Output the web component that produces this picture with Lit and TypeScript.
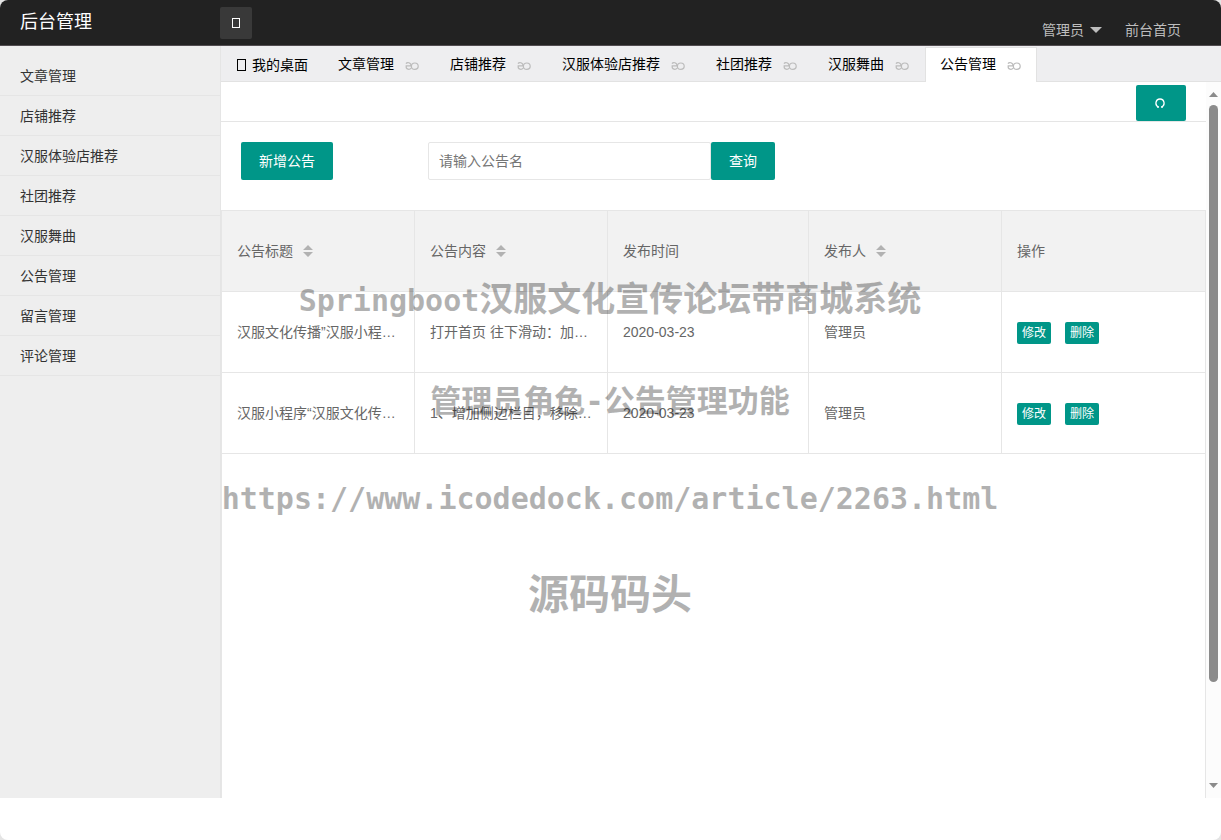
import { LitElement, html, css } from "lit";
import { customElement, state } from "lit/decorators.js";

interface Notice {
  title: string;
  content: string;
  date: string;
  author: string;
}

const MENU = ["文章管理", "店铺推荐", "汉服体验店推荐", "社团推荐", "汉服舞曲", "公告管理", "留言管理", "评论管理"];
const TABS = ["文章管理", "店铺推荐", "汉服体验店推荐", "社团推荐", "汉服舞曲", "公告管理"];
const COLUMNS = [
  { label: "公告标题", sortable: true },
  { label: "公告内容", sortable: true },
  { label: "发布时间", sortable: false },
  { label: "发布人", sortable: true },
  { label: "操作", sortable: false },
];
const NOTICES: Notice[] = [
  { title: "汉服文化传播”汉服小程序上线公告", content: "打开首页 往下滑动：加载更多文章", date: "2020-03-23", author: "管理员" },
  { title: "汉服小程序“汉服文化传播”更新", content: "1、增加侧边栏目，移除旧版导航", date: "2020-03-23", author: "管理员" },
];

@customElement("app-root")
export class AppRoot extends LitElement {
  @state() private active = "公告管理";

  static styles = css`
    :host {
      display: block;
      background: #e4e4e4;
      font-family: "Liberation Sans", "Noto Sans CJK SC", sans-serif;
      font-size: 14px;
      line-height: 24px;
      color: #333;
    }
    * { box-sizing: border-box; }
    a { color: inherit; text-decoration: none; }
    button, input { font: inherit; margin: 0; }
    button { border: 0; padding: 0; cursor: pointer; }
    svg { display: block; }
    .page {
      position: relative;
      display: flex;
      flex-direction: column;
      min-height: 100vh;
      padding-bottom: 42px;
      background: #fff;
      border-radius: 8px;
      overflow: hidden;
    }
    .header {
      display: flex;
      align-items: center;
      height: 46px;
      background: #222;
      border-bottom: 1px solid #514c50;
      color: #fff;
    }
    .logo { width: 220px; padding-left: 20px; font-size: 18px; font-weight: 400; margin: 0; padding-bottom: 2px; }
    .toggle {
      display: grid;
      place-items: center;
      width: 32px;
      height: 32px;
      border-radius: 2px;
      background: #393939;
    }
    .user {
      display: flex;
      gap: 23px;
      margin-left: auto;
      padding: 14px 40px 0 0;
      color: #bdbdbd;
    }
    .account { display: flex; align-items: center; gap: 6px; }
    .body { display: flex; flex: 1; }
    .side {
      flex: none;
      width: 221px;
      padding-top: 10px;
      background: #eee;
      border-right: 1px solid #e5e5e5;
    }
    .side a {
      display: block;
      height: 40px;
      padding-left: 20px;
      line-height: 40px;
      border-bottom: 1px solid #e5e5e5;
    }
    .main { flex: 1; min-width: 0; display: flex; flex-direction: column; }
    .tabs {
      display: flex;
      height: 36px;
      padding-top: 1px;
      background: #eeeef0;
      border-bottom: 1px solid #e2e2e2;
      color: #000;
    }
    .tab {
      display: flex;
      align-items: center;
      gap: 11px;
      height: 35px;
      padding: 0 15px 2px 14px;
      border: 1px solid transparent;
      border-bottom: 0;
      border-right: 0;
      background: none;
      color: inherit;
    }
    .tab + .tab { padding-right: 16px; }
    .home { gap: 5px; padding: 0 15px; }
    .tab.on { padding-right: 15px; background: #fff; border-color: #e2e2e2; border-right: 1px solid #e2e2e2; }
    .close { padding-top: 4px; }
    .frame { display: flex; flex: 1; }
    .content { flex: 1; min-width: 0; display: flex; flex-direction: column; }
    .crumb {
      display: flex;
      justify-content: flex-end;
      height: 40px;
      padding: 3px 20px 0 0;
      border-bottom: 1px solid #e5e5e5;
    }
    .refresh {
      display: grid;
      place-items: center;
      width: 50px;
      height: 36px;
      padding-right: 2px;
      border-radius: 2px;
      background: #009688;
    }
    .tools { display: flex; gap: 95px; padding: 20px 20px 30px; }
    .primary {
      height: 38px;
      padding: 0 18px;
      border-radius: 2px;
      background: #009688;
      color: #fff;
      white-space: nowrap;
    }
    .search { display: flex; }
    .search input {
      width: 283px;
      height: 38px;
      padding: 0 10px;
      border: 1px solid #e6e6e6;
      border-radius: 2px;
      outline: 0;
    }
    .search input::placeholder { color: #757575; opacity: 1; }
    .grid { flex: 1; border: 1px solid #e6e6e6; border-bottom: 0; }
    table { width: 100%; table-layout: fixed; border-collapse: separate; border-spacing: 0; color: #666; }
    .narrow { width: 193px; }
    .wide { width: 201px; }
    th, td {
      height: 81px;
      padding: 0 15px;
      border: 0 solid #e6e6e6;
      border-width: 0 1px 1px 0;
      text-align: left;
      font-weight: 400;
      white-space: nowrap;
      overflow: hidden;
      text-overflow: ellipsis;
    }
    th { background: #f2f2f2; }
    th:last-child, td:last-child { border-right: 0; }
    .label { display: flex; align-items: center; gap: 10px; }
    .ops { display: flex; gap: 14px; padding-top: 2px; }
    .mini {
      width: 34px;
      height: 22px;
      border-radius: 2px;
      background: #009688;
      color: #fff;
      font-size: 12px;
      line-height: 22px;
    }
    .bar {
      flex: none;
      display: flex;
      flex-direction: column;
      align-items: center;
      gap: 7px;
      width: 15px;
      padding: 10px 0 9px;
      background: #fcfcfc;
    }
    .track { flex: 1; width: 9px; }
    .thumb { height: 86%; border-radius: 5px; background: #8b8b8b; }
    .marks {
      position: absolute;
      top: 273px;
      left: 0;
      width: 100%;
      padding: 0 1px 0 0;
      display: flex;
      flex-direction: column;
      align-items: center;
      color: #000;
      opacity: 0.3;
      font-family: "DejaVu Sans Mono", "Noto Sans CJK SC", monospace;
      font-weight: 700;
      white-space: nowrap;
      pointer-events: none;
    }
    .marks p { margin: 0; }
    .latin { font-size: 30px; }
    .m1 { font-size: 34px; line-height: 52px; }
    .m2 { font-size: 31px; line-height: 52px; padding-top: 48px; }
    .m3 { font-size: 30px; line-height: 52px; padding-top: 46px; }
    .m4 { font-size: 41px; line-height: 60px; padding-top: 40px; }
  `;

  private closeIcon() {
    return html`<svg class="close" width="14" height="14" viewBox="0 0 14 10" fill="none" stroke="#bcbcbc" stroke-width="1.2">
      <path d="M1 2.600C2 1 6 1 6.200 5.200M6.200 4.800H1.200C.6 8.800 4.800 9 6.200 7" />
      <ellipse cx="9.800" cy="5.200" rx="3.400" ry="3.200" />
    </svg>`;
  }

  private sortIcon() {
    return html`<svg width="10" height="12" viewBox="0 0 10 12" fill="#b2b2b2"><path d="M5 0L10 5H0ZM0 7H10L5 12Z" /></svg>`;
  }

  render() {
    return html`
      <div class="page">
        <header class="header">
          <h1 class="logo">后台管理</h1>
          <button class="toggle" aria-label="菜单">
            <svg width="8" height="10" fill="none" stroke="#fff"><rect x=".5" y=".5" width="7" height="9" /></svg>
          </button>
          <nav class="user">
            <a class="account" href="#">管理员
              <svg width="12" height="6" fill="#bdbdbd"><path d="M0 0H12L6 6Z" /></svg>
            </a>
            <a href="#">前台首页</a>
          </nav>
        </header>
        <div class="body">
          <nav class="side">${MENU.map((m) => html`<a href="#">${m}</a>`)}</nav>
          <main class="main">
            <div class="tabs">
              <button class="tab home">
                <svg width="10" height="12" fill="none" stroke="#000"><rect x=".5" y=".5" width="8" height="11" /></svg>
                我的桌面
              </button>
              ${TABS.map(
                (t) => html`<button class="tab ${t === this.active ? "on" : ""}" @click=${() => (this.active = t)}>
                  ${t}${this.closeIcon()}
                </button>`
              )}
            </div>
            <div class="frame">
              <div class="content">
                <div class="crumb">
                  <button class="refresh" aria-label="刷新">
                    <svg width="10" height="10" fill="none" stroke="#fff" stroke-width="1.300">
                      <path d="M2 9H4M6 9H8M3.700 9C-.6 7.500 .4 1 5 1S10.600 7.500 6.300 9" />
                    </svg>
                  </button>
                </div>
                <div class="tools">
                  <button class="primary">新增公告</button>
                  <form class="search" @submit=${(e: Event) => e.preventDefault()}>
                    <input type="text" aria-label="公告名" placeholder="请输入公告名" />
                    <button class="primary">查询</button>
                  </form>
                </div>
                <div class="grid">
                  <table>
                    <colgroup>
                      <col class="narrow" /><col class="narrow" /><col class="wide" /><col class="narrow" /><col />
                    </colgroup>
                    <thead>
                      <tr>
                        ${COLUMNS.map(
                          (c) => html`<th scope="col"><div class="label">${c.label}${c.sortable ? this.sortIcon() : ""}</div></th>`
                        )}
                      </tr>
                    </thead>
                    <tbody>
                      ${NOTICES.map(
                        (n) => html`<tr>
                          <td>${n.title}</td>
                          <td>${n.content}</td>
                          <td>${n.date}</td>
                          <td>${n.author}</td>
                          <td><div class="ops"><button class="mini">修改</button><button class="mini">删除</button></div></td>
                        </tr>`
                      )}
                    </tbody>
                  </table>
                </div>
              </div>
              <div class="bar" aria-hidden="true">
                <svg width="9" height="6" fill="#8b8b8b"><path d="M4.500 0L9 5H0Z" /></svg>
                <div class="track"><div class="thumb"></div></div>
                <svg width="9" height="6" fill="#8b8b8b"><path d="M0 0H9L4.500 5Z" /></svg>
              </div>
            </div>
          </main>
        </div>
        <div class="marks">
          <p class="m1"><span class="latin">Springboot</span>汉服文化宣传论坛带商城系统</p>
          <p class="m2">管理员角色-公告管理功能</p>
          <p class="m3">https://www.icodedock.com/article/2263.html</p>
          <p class="m4">源码码头</p>
        </div>
      </div>
    `;
  }
}
